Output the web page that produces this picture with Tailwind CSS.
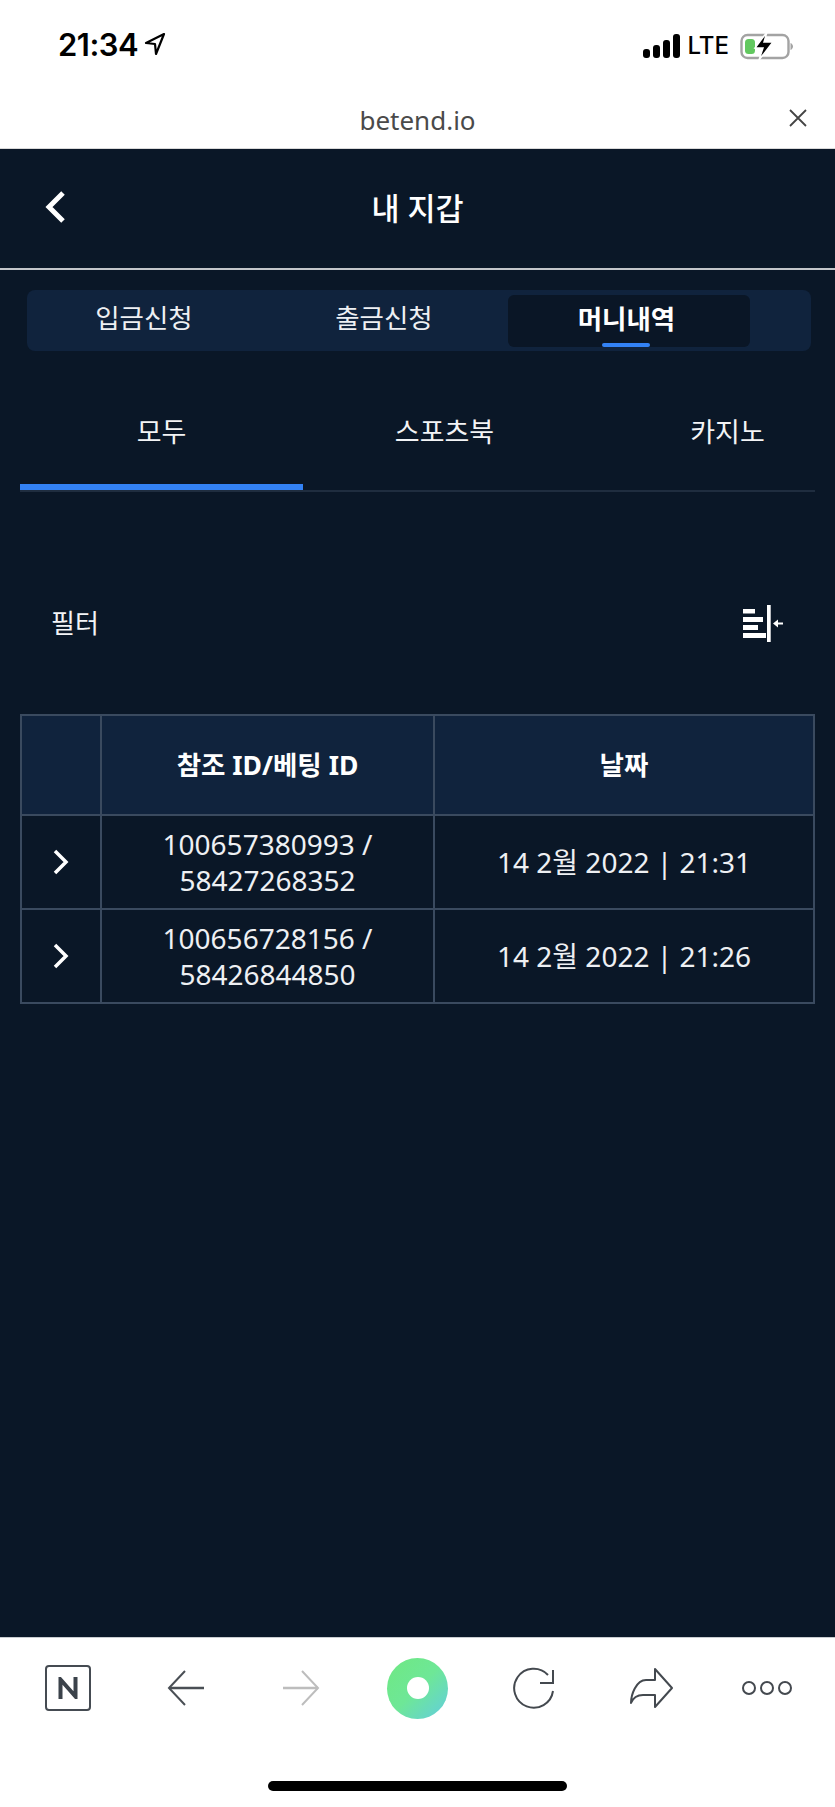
<!DOCTYPE html>
<html lang="ko">
  <head>
    <meta charset="UTF-8" />
    <meta name="viewport" content="width=device-width, initial-scale=1.0" />
    <title>내 지갑</title>
    <script src="https://cdn.jsdelivr.net/npm/@tailwindcss/browser@4"></script>
  </head>
  <body class="bg-white font-['Noto_Sans','Noto_Sans_CJK_KR',sans-serif]">
    <div class="w-[835px] h-[1807px] flex flex-col overflow-hidden">
      <!-- status bar -->
      <div class="h-[88px] shrink-0 flex items-center justify-between pl-[58px] pr-[42px] text-black">
        <div class="flex items-center gap-[6px]">
          <span class="font-['Inter'] font-semibold text-[31px] leading-none tracking-[-0.5px]">21:34</span>
          <svg width="22" height="24" viewBox="0 0 22 24" fill="none" stroke="#000" stroke-width="2.2" stroke-linejoin="round"><path d="M20 2 2 11l9 1 1 10z"/></svg>
        </div>
        <div class="flex items-center mt-[3px]">
          <svg width="37" height="24" viewBox="0 0 37 24" fill="#000"><rect x="0" y="15" width="7" height="9" rx="3"/><rect x="10" y="11" width="7" height="13" rx="3"/><rect x="20" y="6" width="7" height="18" rx="3"/><rect x="30" y="0" width="7" height="24" rx="3"/></svg>
          <span class="font-['Inter'] font-medium text-[24px] leading-none ml-[8px]">LTE</span>
          <svg class="ml-[11px]" width="53" height="28" viewBox="0 0 53 28" fill="none"><rect x="1.5" y="3" width="47" height="23" rx="6" stroke="#a3a3a3" stroke-width="2.4"/><rect x="5" y="7" width="10" height="15" rx="3.5" fill="#62c85f"/><path d="M50.5 11v7c1.500-.6 2.500-2 2.500-3.500s-1-2.900-2.500-3.500z" fill="#a3a3a3"/><path d="M27 0 15 16h8l-4 12 14-18h-9z" fill="#000" stroke="#fff" stroke-width="1.500"/></svg>
        </div>
      </div>
      <!-- browser url bar -->
      <div class="h-[61px] shrink-0 relative flex items-center justify-center border-b border-[#d9d9d9]">
        <span class="text-[26px] leading-none text-[#4a4a4a] mt-[3px]">betend.io</span>
        <svg class="absolute right-[28px] top-[21px]" width="18" height="18" viewBox="0 0 18 18" stroke="#444" stroke-width="1.800" fill="none"><path d="M1 1l16 16M17 1 1 17"/></svg>
      </div>
      <!-- page -->
      <div class="flex-1 bg-[#0a1727] text-white flex flex-col min-h-0">
        <div class="h-[121px] shrink-0 relative flex items-center justify-center border-b-2 border-[#c3c6ca]">
          <svg class="absolute left-[44px] top-[41px]" width="22" height="34" viewBox="0 0 22 34" fill="none" stroke="#fff" stroke-width="5"><path d="M19 3 5 17l14 14"/></svg>
          <span class="text-[30.5px] font-medium leading-none">내 지갑</span>
        </div>
        <!-- main tabs -->
        <div class="mt-[20px] ml-[27px] mr-[24px] h-[61px] shrink-0 bg-[#10233d] rounded-[8px] flex items-center pl-[1px] py-[5px] text-[26.5px]">
          <div class="w-[232px] text-center leading-none mb-[4px] text-[#eef0f3]">입금신청</div>
          <div class="w-[248px] text-center leading-none mb-[4px] text-[#eef0f3]">출금신청</div>
          <div class="relative w-[242px] h-[52px] bg-[#0a1626] rounded-[6px] flex items-center justify-center font-bold pr-[5px]">
            <span class="leading-none mb-[2px]">머니내역</span>
            <div class="absolute bottom-0 left-[94px] w-[48px] h-[4px] rounded-[2px] bg-[#3382f5]"></div>
          </div>
        </div>
        <!-- sub tabs -->
        <div class="mt-[32px] mx-[20px] h-[109px] shrink-0 flex border-b-2 border-[#1f2d3f] text-[27px] text-[#f3f4f6] overflow-hidden">
          <div class="w-[283px] shrink-0 h-[107px] border-b-[6px] border-[#3382f5] flex justify-center pt-[35px] leading-none">
            <span>모두</span>
          </div>
          <div class="w-[283px] shrink-0 flex justify-center pt-[35px] leading-none"><span>스포츠북</span></div>
          <div class="w-[283px] shrink-0 flex justify-center pt-[35px] leading-none"><span>카지노</span></div>
        </div>
        <!-- filter -->
        <div class="mt-[111px] flex items-center justify-between pl-[51px] pr-[52px] h-[40px] shrink-0">
          <span class="text-[26px] leading-none text-[#f3f4f6]">필터</span>
          <svg width="40" height="37" viewBox="0 0 40 37" fill="#fff"><rect x="0" y="4" width="12" height="4.500"/><rect x="0" y="12" width="20" height="5"/><rect x="0" y="20" width="15" height="5"/><rect x="0" y="28" width="23" height="5"/><rect x="24" y="0" width="3.700" height="37"/><rect x="33" y="17.500" width="7" height="2"/><path d="M35 14.500v8l-5-4z"/></svg>
        </div>
        <!-- table -->
        <div class="mt-[71px] mx-[20px] grid grid-cols-[80px_333px_1fr] border-2 border-[#3a4a5f] text-[#eef0f3]">
          <div class="h-[100px] bg-[#10233d] border-r-2 border-b-2 border-[#3a4a5f]"></div>
          <div class="h-[100px] bg-[#10233d] border-r-2 border-b-2 border-[#3a4a5f] flex justify-center items-center font-bold text-white text-[26.5px] leading-none">참조 ID/베팅 ID</div>
          <div class="h-[100px] bg-[#10233d] border-b-2 border-[#3a4a5f] flex justify-center items-center font-bold text-white text-[26.5px] leading-none">날짜</div>

          <div class="h-[94px] border-r-2 border-b-2 border-[#3a4a5f] flex justify-center items-center">
            <svg width="18" height="26" viewBox="0 0 18 26" fill="none" stroke="#fff" stroke-width="3.500"><path d="M3 2l11 11L3 24"/></svg>
          </div>
          <div class="h-[94px] border-r-2 border-b-2 border-[#3a4a5f] flex flex-col justify-center items-center text-[28px] leading-[36.5px]"><span>100657380993 /</span><span>58427268352</span></div>
          <div class="h-[94px] border-b-2 border-[#3a4a5f] flex justify-center items-center text-[28px]">14 2월 2022 | 21:31</div>

          <div class="h-[92px] border-r-2 border-[#3a4a5f] flex justify-center items-center">
            <svg width="18" height="26" viewBox="0 0 18 26" fill="none" stroke="#fff" stroke-width="3.500"><path d="M3 2l11 11L3 24"/></svg>
          </div>
          <div class="h-[92px] border-r-2 border-[#3a4a5f] flex flex-col justify-center items-center text-[28px] leading-[36.5px]"><span>100656728156 /</span><span>58426844850</span></div>
          <div class="h-[92px] flex justify-center items-center text-[28px]">14 2월 2022 | 21:26</div>
        </div>
      </div>
      <!-- browser toolbar -->
      <div class="h-[170px] shrink-0 bg-white border-t border-[#c8ccd0] flex flex-col">
        <div class="h-[100px] flex items-center pl-[45px]">
          <div class="w-[46px] h-[46px] border-[2.5px] border-[#454b52] rounded-[4px] flex items-center justify-center">
            <svg width="20" height="22" viewBox="0 0 20 22" fill="none" stroke="#3b424a" stroke-width="4"><path d="M2.500 22V2.500L17.500 19.500V0"/></svg>
          </div>
          <svg class="ml-[76px]" width="38" height="36" viewBox="0 0 38 36" fill="none" stroke="#4a4f55" stroke-width="2"><path d="M18 1 2 18l16 17"/><path d="M2 18h35" stroke-width="2.500"/></svg>
          <svg class="ml-[77px]" width="38" height="36" viewBox="0 0 38 36" fill="none" stroke="#bdbdbd" stroke-width="2"><path d="M20 1l16 17-16 17"/><path d="M1 18h35" stroke-width="2.500"/></svg>
          <div class="ml-[67px] w-[61px] h-[61px] rounded-full bg-[linear-gradient(135deg,#6fe882_0%,#6ee797_50%,#62cde0_100%)] flex items-center justify-center">
            <div class="w-[22px] h-[22px] rounded-full bg-white"></div>
          </div>
          <svg class="ml-[65px]" width="42" height="42" viewBox="0 0 42 42" fill="none" stroke="#44494f" stroke-width="2"><path d="M35 8A19.500 19.500 0 1 0 40 24"/><path d="M40 3v13H27"/></svg>
          <svg class="ml-[73px]" width="46" height="42" viewBox="0 0 46 42" fill="none" stroke="#44494f" stroke-width="2" stroke-linejoin="round"><path d="M27 2 44 21 27 40V28H15C9 28 5 31 3 36 3 28 8 13 18 13h9z"/></svg>
          <svg class="ml-[68px]" width="50" height="16" viewBox="0 0 50 16" fill="none" stroke="#44494f" stroke-width="2"><circle cx="7" cy="8" r="6"/><circle cx="25" cy="8" r="6"/><circle cx="43" cy="8" r="6"/></svg>
        </div>
        <div class="mt-[43px] mx-auto w-[299px] h-[10px] rounded-full bg-black"></div>
      </div>
    </div>
  </body>
</html>
